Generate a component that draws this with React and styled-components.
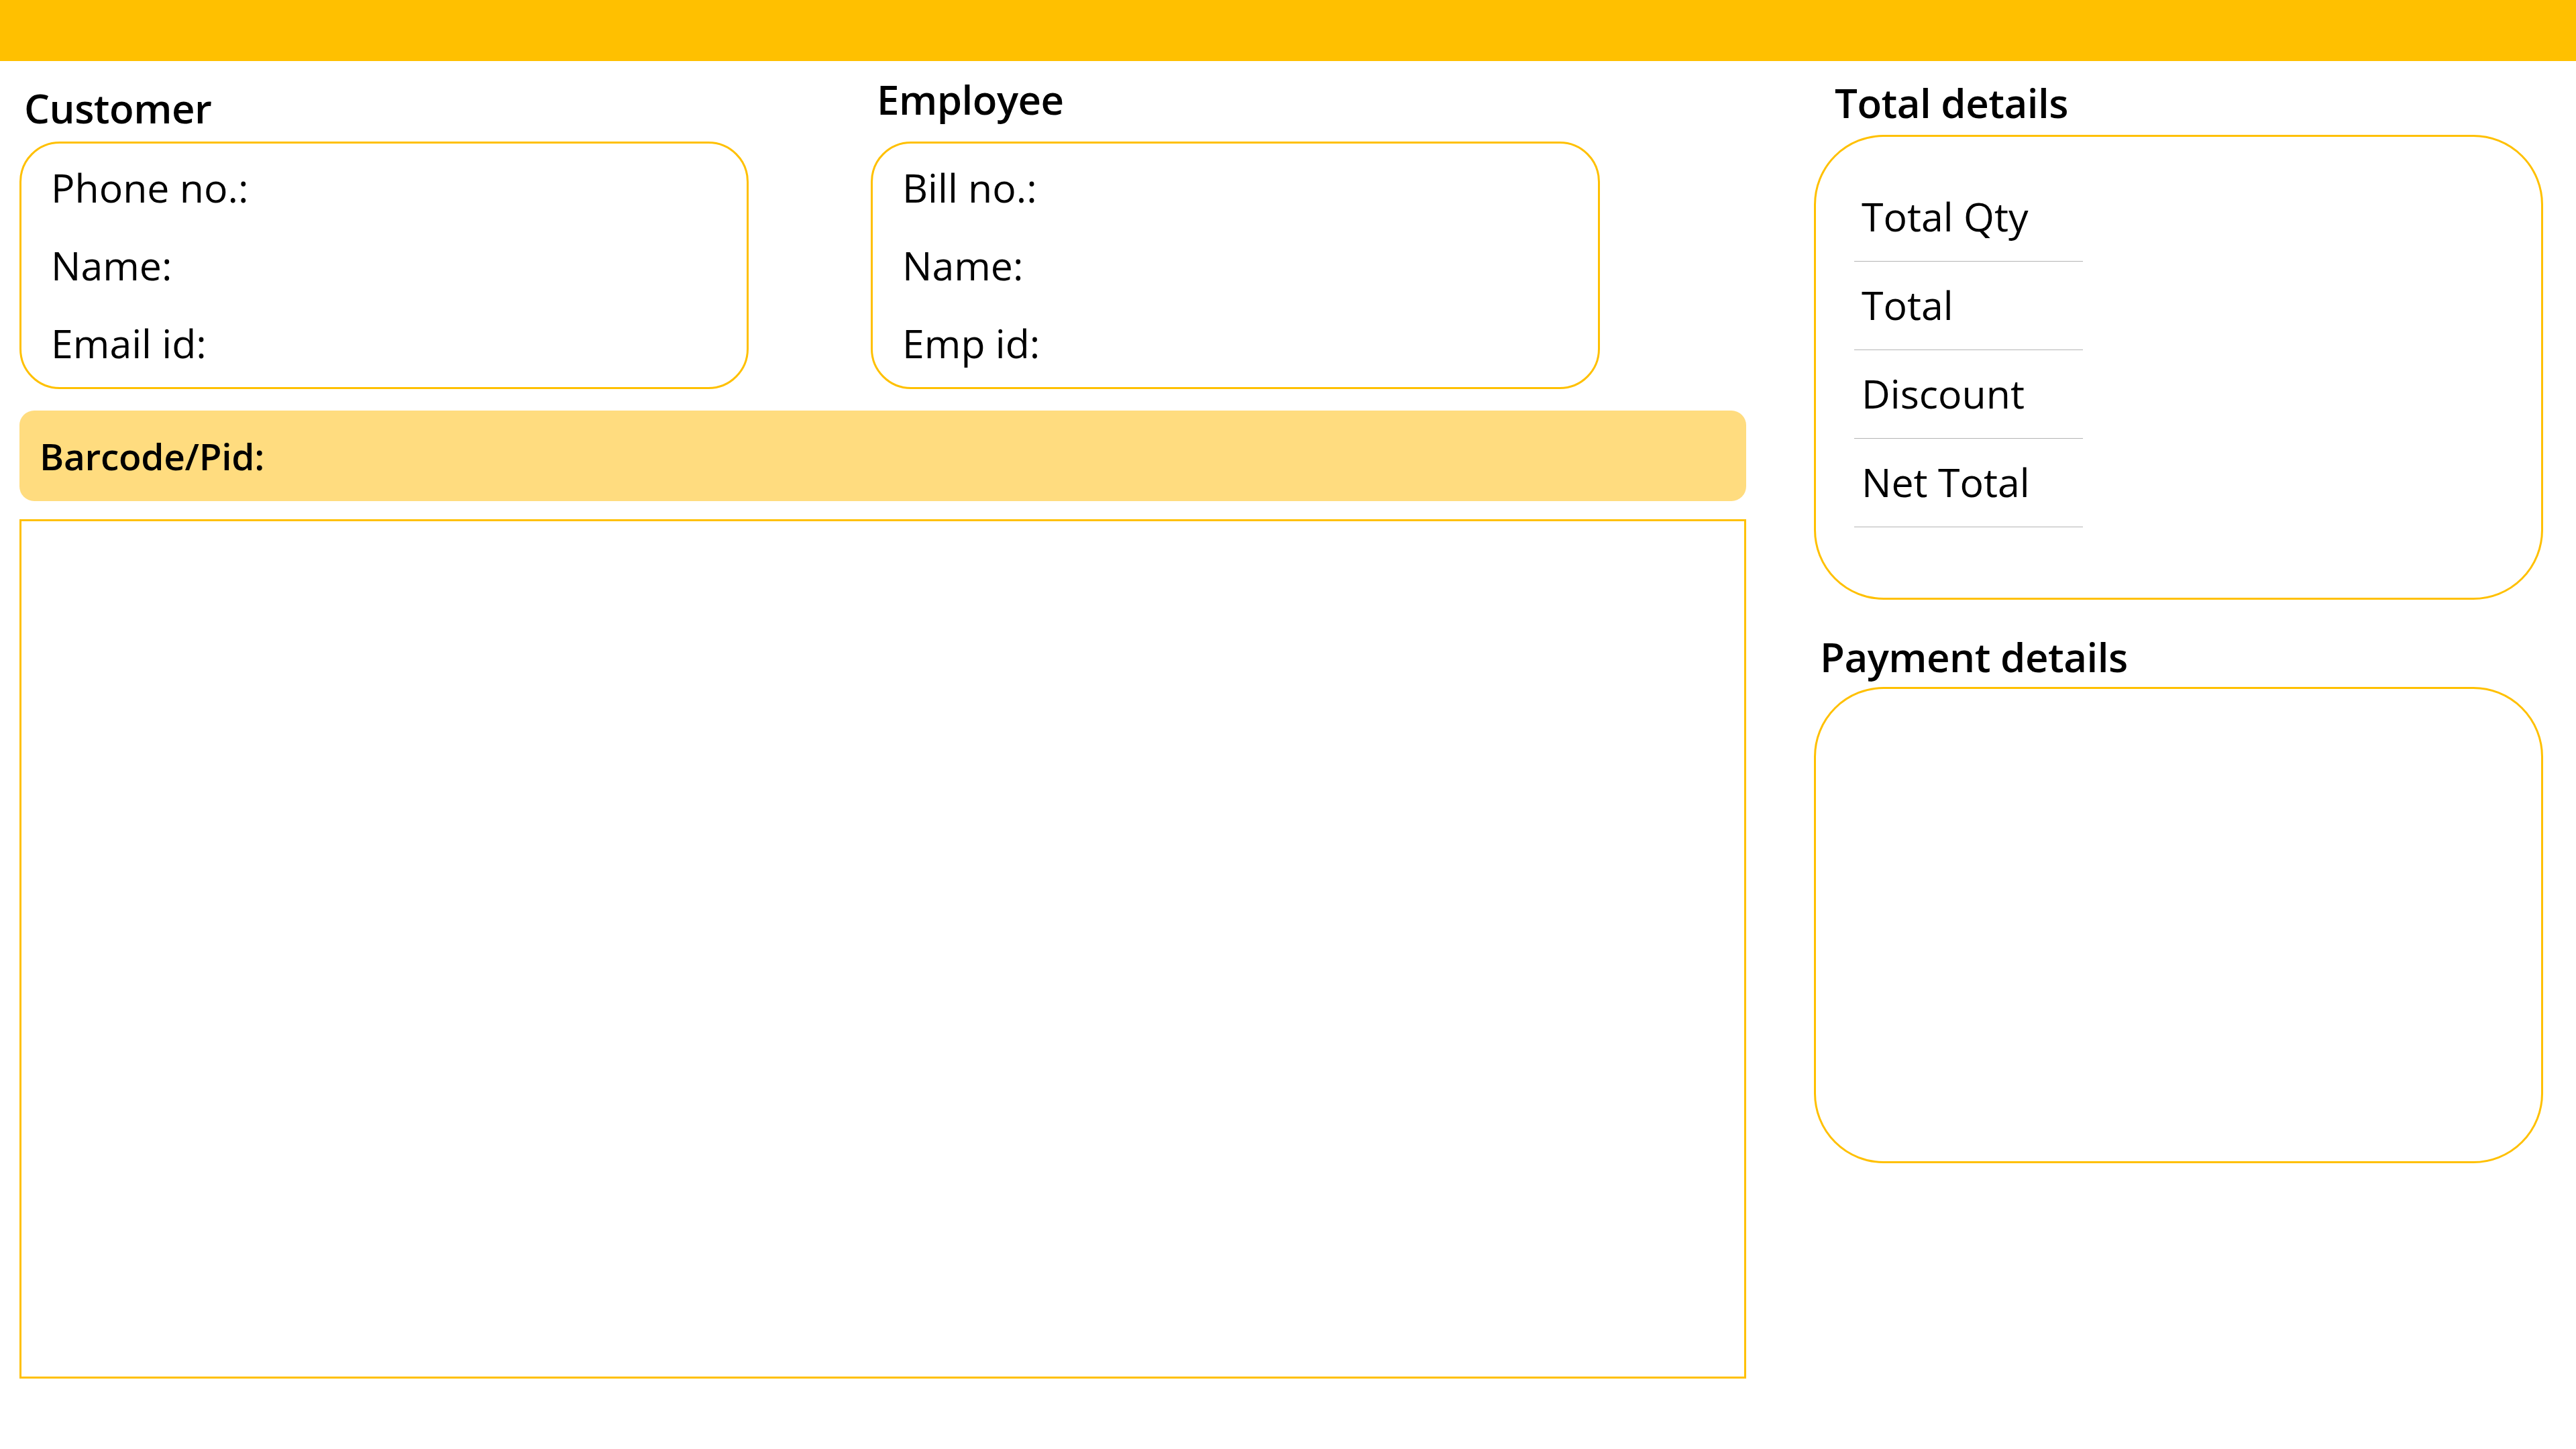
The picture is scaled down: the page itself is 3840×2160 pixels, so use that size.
import styled, { createGlobalStyle } from 'styled-components';

const GlobalStyle = createGlobalStyle`
	* {
		box-sizing: border-box;
	}
	html, body {
		margin: 0;
		padding: 0;
		background: #fff;
	}
	body {
		font-family: 'Open Sans', 'Noto Sans', 'Liberation Sans', sans-serif;
		color: #000;
	}
`;

const Page = styled.div`
	width: 3840px;
	height: 2160px;
	display: flex;
	flex-direction: column;
	background: #fff;
`;

const TopBar = styled.header`
	height: 91px;
	flex-shrink: 0;
	background-color: #ffc000;
`;

const Main = styled.main`
	display: grid;
	grid-template-columns: 2574px 1087px;
	column-gap: 101px;
	padding: 0 49px 0 29px;
	align-items: start;
`;

const LeftColumn = styled.section`
	display: flex;
	flex-direction: column;
	padding-top: 16px;
`;

const RightColumn = styled.aside`
	display: flex;
	flex-direction: column;
	padding-top: 21px;
`;

const InfoRow = styled.div`
	display: flex;
	align-items: flex-end;
	gap: 182px;
`;

const Panel = styled.div`
	display: flex;
	flex-direction: column;
	margin-top: ${({ $top }) => $top || 0}px;
`;

const Title = styled.h2`
	margin: 0 0 ${({ $gap }) => $gap}px 0;
	padding-left: ${({ $indent }) => $indent}px;
	font-size: 60px;
	line-height: 82px;
	font-weight: 600;
	letter-spacing: -0.5px;
`;

const InfoBox = styled.div`
	width: 1087px;
	height: 369px;
	border: 3px solid #ffc000;
	border-radius: 60px;
	padding: 7px 0 8px 44px;
`;

const Field = styled.div`
	font-size: 59px;
	line-height: 116px;
	font-weight: 400;
`;

const BarcodeBar = styled.div`
	display: flex;
	align-items: center;
	height: 135px;
	margin-top: 32px;
	padding-left: 30px;
	border-radius: 22px;
	background-color: #ffdc7f;
	font-size: 55px;
	font-weight: 600;
	letter-spacing: -0.3px;
`;

const ItemsTable = styled.div`
	height: 1281px;
	margin-top: 27px;
	border: 3px solid #ffc000;
`;

const SummaryBox = styled.div`
	width: 1087px;
	height: ${({ $height }) => $height}px;
	border: 3px solid #ffc000;
	border-radius: 104px;
	padding: 54px 0 0 57px;
`;

const SummaryList = styled.ul`
	list-style: none;
	margin: 0;
	padding: 0;
	width: 341px;
`;

const SummaryItem = styled.li`
	padding: 23px 0 26px 11px;
	font-size: 59px;
	line-height: 82px;
	border-bottom: 1px solid #b4b4b4;
`;

const customerFields = ['Phone no.:', 'Name:', 'Email id:'];
const employeeFields = ['Bill no.:', 'Name:', 'Emp id:'];
const totals = ['Total Qty', 'Total', 'Discount', 'Net Total'];

function App() {
	return (
		<>
			<GlobalStyle />
			<Page>
				<TopBar />
				<Main>
					<LeftColumn>
						<InfoRow>
							<Panel>
								<Title $gap={9} $indent={7}>
									Customer
								</Title>
								<InfoBox>
									{customerFields.map(f => (
										<Field key={f}>{f}</Field>
									))}
								</InfoBox>
							</Panel>

							<Panel>
								<Title $gap={22} $indent={9}>
									Employee
								</Title>
								<InfoBox>
									{employeeFields.map(f => (
										<Field key={f}>{f}</Field>
									))}
								</InfoBox>
							</Panel>
						</InfoRow>

						<BarcodeBar>Barcode/Pid:</BarcodeBar>
						<ItemsTable />
					</LeftColumn>

					<RightColumn>
						<Panel>
							<Title $gap={7} $indent={31}>
								Total details
							</Title>
							<SummaryBox $height={693}>
								<SummaryList>
									{totals.map(t => (
										<SummaryItem key={t}>{t}</SummaryItem>
									))}
								</SummaryList>
							</SummaryBox>
						</Panel>

						<Panel $top={44}>
							<Title $gap={4} $indent={9}>
								Payment details
							</Title>
							<SummaryBox $height={710} />
						</Panel>
					</RightColumn>
				</Main>
			</Page>
		</>
	);
}

export default App;
